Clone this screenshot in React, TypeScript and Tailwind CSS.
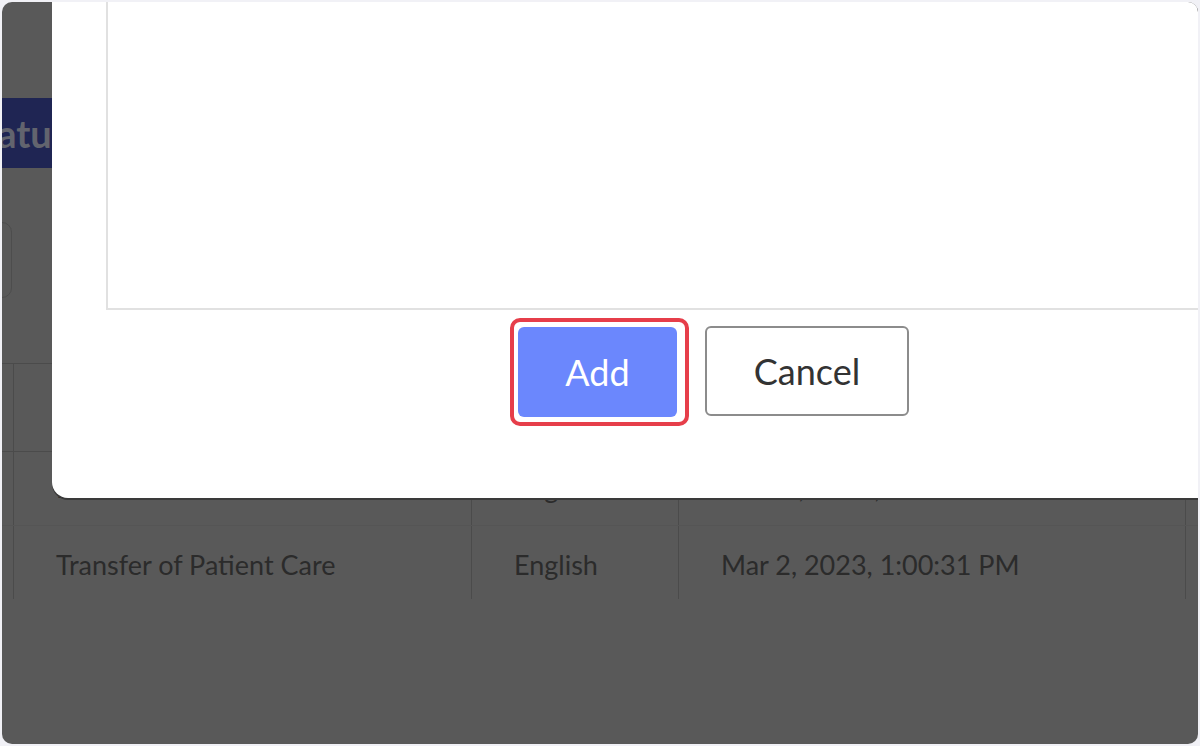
const font = "font-['Lato','Noto_Sans',sans-serif]";

const rows = [
  { name: "Handover of Care", language: "English", created: "Jan 30, 2023, 3:58:08 PM" },
  { name: "Transfer of Patient Care", language: "English", created: "Mar 2, 2023, 1:00:31 PM" }
];

function Row({ children, className = "" }: { children: React.ReactNode; className?: string }) {
  return <div className={`flex ${className}`}>{children}</div>;
}

export default function App() {
  return (
    <div className={`h-[746px] w-[1200px] bg-[#f1f1f6] p-[2px] ${font}`}>
      <div className="relative h-full overflow-hidden rounded-[10px] bg-[#595959]">
        {/* dimmed page behind the dialog */}
        <div className="pt-[96px]">
          <div className="flex h-[70px] w-[200px] items-center bg-[#1f2553] -ml-[39px]">
            <span className="text-[38px] font-bold text-[#62646e]">Status</span>
          </div>
          <div className="mt-[54px] h-[76px] w-[20px] -ml-[10px] rounded-r-[10px] border border-[#4d4d4d]" />
          <div className="mt-[65px] border-t border-[#4b4b4b]">
            <Row className="h-[88px] border-b border-[#4b4b4b]">
              <div className="w-[11px]" />
              <div className="w-[458px] border-l border-[#4b4b4b]" />
              <div className="w-[207px] border-l border-[#4b4b4b]" />
              <div className="w-[508px] border-x border-[#4b4b4b]" />
            </Row>
            {rows.map((row, i) => {
              const pad = i === 0 ? "" : "pt-[6px]";
              return (
                <Row
                  key={row.name}
                  className={`${i === 0 ? "h-[74px] border-b border-[#555555]" : "h-[73px]"} text-[27px] text-[#2b2b2b]`}
                >
                  <div className="w-[11px]" />
                  <div className={`flex w-[458px] items-center border-l border-[#4b4b4b] px-[42px] ${pad}`}>{row.name}</div>
                  <div className={`flex w-[207px] items-center border-l border-[#4b4b4b] px-[42px] ${pad}`}>{row.language}</div>
                  <div className={`flex w-[508px] items-center border-x border-[#4b4b4b] px-[42px] ${pad}`}>{row.created}</div>
                </Row>
              );
            })}
          </div>
        </div>

        {/* dialog */}
        <div className="absolute left-[50px] right-0 top-0 h-[496px] rounded-bl-[16px] bg-white shadow-[0_2px_0_#3a3a3a]">
          <div className="-mt-[10px] -mr-[10px] ml-[54px] h-[318px] border-2 border-[#e1e1e1]" />
          <div className="mt-[8px] flex items-start pl-[458px]">
            <div className="rounded-[10px] border-[4px] border-[#e63e4a] py-[5px] pl-[4px] pr-[8px]">
              <button className="flex h-[90px] w-[159px] items-center justify-center rounded-[6px] bg-[#6b87fd] text-[36px] text-white">
                Add
              </button>
            </div>
            <button className="ml-[16px] mt-[8px] flex h-[90px] w-[204px] items-center justify-center rounded-[6px] border-2 border-[#8c8c8c] bg-white text-[36px] text-[#333333]">
              Cancel
            </button>
          </div>
        </div>
      </div>
    </div>
  );
}
